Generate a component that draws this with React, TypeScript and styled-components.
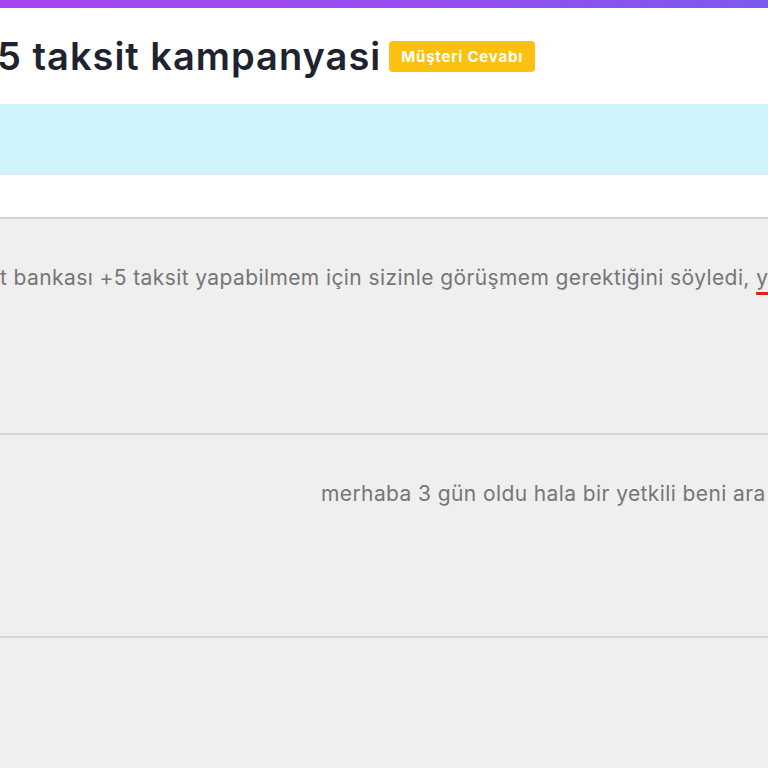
import styled, { createGlobalStyle } from "styled-components";

const GlobalStyle = createGlobalStyle`
	html, body {
		margin: 0;
		padding: 0;
		background: #efefef;
		overflow: hidden;
	}
	body {
		font-family: Inter, "Noto Sans", sans-serif;
	}
`;

const App = () => {
	return (
		<>
			<GlobalStyle />
			<Page>
				<TopBar />
				<Header>
					<Title>5 taksit kampanyasi</Title>
					<Badge>Müşteri Cevabı</Badge>
				</Header>
				<InfoBand />
				<Spacer />
				<MessageList>
					<Message>
						<MessageText>
							t bankası +5 taksit yapabilmem için sizinle görüşmem gerektiğini
							söyledi, <Misspelled>y</Misspelled>
						</MessageText>
					</Message>
					<Message $height={203} $indent={321}>
						<MessageText>merhaba 3 gün oldu hala bir yetkili beni ara</MessageText>
					</Message>
					<Message $height={130} />
				</MessageList>
			</Page>
		</>
	);
};

const Page = styled.div`
	width: 768px;
	height: 768px;
	overflow: hidden;
	display: flex;
	flex-direction: column;
	background: #efefef;
`;

const TopBar = styled.div`
	height: 8px;
	flex-shrink: 0;
	background: linear-gradient(90deg, #a646f2 0%, #9a4cf3 50%, #7d5af0 100%);
`;

const Header = styled.div`
	height: 96px;
	flex-shrink: 0;
	background: #ffffff;
	display: flex;
	align-items: center;
	gap: 8px;
	overflow: hidden;
`;

const Title = styled.h1`
	margin: 0 0 0 -3px;
	font-size: 38px;
	font-weight: 600;
	color: #1f2330;
	white-space: nowrap;
	letter-spacing: 1px;
	flex-shrink: 0;
`;

const Badge = styled.span`
	background: #fcc012;
	color: #ffffff;
	font-size: 15px;
	font-weight: 700;
	letter-spacing: 0.8px;
	padding: 6px 12px;
	border-radius: 4px;
	white-space: nowrap;
	flex-shrink: 0;
`;

const InfoBand = styled.div`
	height: 70px;
	flex-shrink: 0;
	background: #cff4fc;
	border-bottom: 1px solid #d7ecf0;
`;

const Spacer = styled.div`
	height: 42px;
	flex-shrink: 0;
	background: #ffffff;
	border-bottom: 2px solid #d4d4d4;
`;

const MessageList = styled.div`
	display: flex;
	flex-direction: column;
`;

const Message = styled.div<{ $height?: number; $indent?: number }>`
	height: ${({ $height }) => $height ?? 216}px;
	flex-shrink: 0;
	box-sizing: border-box;
	padding: 46px 0 0 ${({ $indent }) => $indent ?? 0}px;
	border-bottom: 2px solid #d4d4d4;
	background: #efefef;
	overflow: hidden;

	&:last-child {
		border-bottom: none;
	}
`;

const MessageText = styled.p`
	margin: 0;
	font-size: 21px;
	color: #767676;
	letter-spacing: 0.4px;
	white-space: nowrap;
`;

const Misspelled = styled.span`
	text-decoration: underline solid #e02020;
	text-decoration-thickness: 3px;
	text-underline-offset: 7px;
`;

export default App;
